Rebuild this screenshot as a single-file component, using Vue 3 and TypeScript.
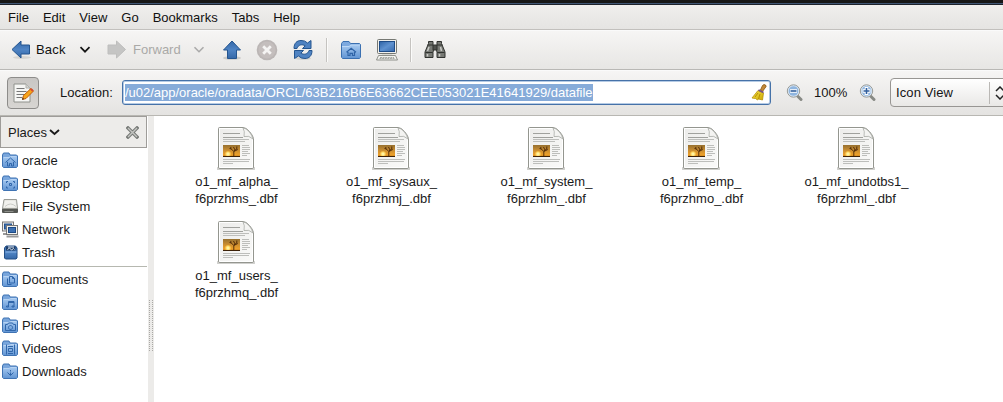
<script setup lang="ts">
interface Place {
  label: string
  icon: 'home' | 'desktop' | 'drive' | 'network' | 'trash' | 'docs' | 'music' | 'pictures' | 'videos' | 'downloads'
}

const menus: string[] = ['File', 'Edit', 'View', 'Go', 'Bookmarks', 'Tabs', 'Help']

const groups: Place[][] = [
  [
    { label: 'oracle', icon: 'home' },
    { label: 'Desktop', icon: 'desktop' },
    { label: 'File System', icon: 'drive' },
    { label: 'Network', icon: 'network' },
    { label: 'Trash', icon: 'trash' },
  ],
  [
    { label: 'Documents', icon: 'docs' },
    { label: 'Music', icon: 'music' },
    { label: 'Pictures', icon: 'pictures' },
    { label: 'Videos', icon: 'videos' },
    { label: 'Downloads', icon: 'downloads' },
  ],
]

const emblems: Record<string, string> = {
  home: 'M3.500 10.500 8.500 6 13.500 10.500M5.500 10v4h2v-2.500h2v2.500h2V10',
  desktop: 'M4.500 8V6.500h1.500M11 6.500h1.500V8M12.500 11.500V13H11M6 13H4.500v-1.500M7.500 8.500h2v2h-2z',
  docs: 'M5.500 7.500v6h4M7.500 5.500h3l2 2v4.500h-5zM10.500 5.500v2h2',
  music: 'M6.500 12.500v-5H12v5M4.500 12h2v1h-2zM10 12h2v1h-2zM6.500 8.500H12',
  pictures: 'M3.500 7.500h2l1-1.500h4l1 1.500h2v6h-10zM8.500 8.500a2 2 0 1 0 .01 0z',
  videos: 'M4.500 4.500v10M12.500 4.500v10M6 6.500h5M6.500 8.500h4v3h-4zM6 13.500h5M4 6.500h1M4 9.500h1M4 12.500h1M12 6.500h1M12 9.500h1M12 12.500h1',
  downloads: 'M8.500 7v1.500M8.500 9.500v2.500M5.500 9.500l3 3 3-3',
}

const files: [string, string][] = [
  ['o1_mf_alpha_', 'f6przhms_.dbf'],
  ['o1_mf_sysaux_', 'f6przhmj_.dbf'],
  ['o1_mf_system_', 'f6przhlm_.dbf'],
  ['o1_mf_temp_', 'f6przhmo_.dbf'],
  ['o1_mf_undotbs1_', 'f6przhml_.dbf'],
  ['o1_mf_users_', 'f6przhmq_.dbf'],
]

const gripRows: number[] = Array.from({ length: 13 }, (_, i) => i * 4)
</script>

<template>
  <div class="window">
    <svg class="defs" width="0" height="0">
      <defs>
        <linearGradient id="blue" x1="0" y1="0" x2="0" y2="1"><stop offset="0" stop-color="#3468a8" /><stop offset=".5" stop-color="#4f84c4" /><stop offset="1" stop-color="#3568a8" /></linearGradient>
        <linearGradient id="folder" x1="0" y1="0" x2="0" y2="1"><stop offset="0" stop-color="#a5c8ef" /><stop offset="1" stop-color="#6396d4" /></linearGradient>
        <linearGradient id="screen" x1="0" y1="0" x2="1" y2="1"><stop offset="0" stop-color="#2d62a5" /><stop offset=".5" stop-color="#5f92d0" /><stop offset="1" stop-color="#3569ad" /></linearGradient>
        <linearGradient id="paper" x1="0" y1="0" x2="1" y2="1"><stop offset="0" stop-color="#ececea" /><stop offset="1" stop-color="#fafaf9" /></linearGradient>
        <linearGradient id="sunset" x1="0" y1="0" x2="0" y2="1"><stop offset="0" stop-color="#96702f" /><stop offset=".5" stop-color="#cf9030" /><stop offset=".85" stop-color="#f0a22a" /><stop offset="1" stop-color="#7a450d" /></linearGradient>
        <linearGradient id="brush" x1="0" y1="0" x2="1" y2="1"><stop offset="0" stop-color="#f7e653" /><stop offset="1" stop-color="#cba800" /></linearGradient>
      </defs>
    </svg>
    <div class="titlebar"></div>
    <nav class="menubar"><span v-for="m in menus" :key="m">{{ m }}</span></nav>

    <div class="toolbar">
      <svg class="i-back" width="22" height="24" viewBox="0 0 22 24">
        <ellipse cx="12" cy="19.500" rx="9" ry="1.500" fill="#d5d4d1" />
        <path d="M2 11.500 11 3v4h8.500v9H11v4z" fill="url(#blue)" stroke="#24558f" />
      </svg>
      <span class="t-back">Back</span>
      <svg class="chev c1" width="12" height="8" viewBox="0 0 12 8"><path d="m1.500 1.200 4.500 4.500 4.500-4.500" fill="none" stroke="#151515" stroke-width="1.700" /></svg>
      <svg class="i-fwd" width="22" height="24" viewBox="0 0 22 24">
        <path d="M19.500 11.500 10.500 3v4H2v9h8.500v4z" fill="#c5c5c4" stroke="#bebebd" />
      </svg>
      <span class="t-fwd">Forward</span>
      <svg class="chev c2" width="12" height="8" viewBox="0 0 12 8"><path d="m1.500 1.200 4.500 4.500 4.500-4.500" fill="none" stroke="#aaa" stroke-width="1.600" /></svg>
      <svg class="i-up" width="22" height="24" viewBox="0 0 22 24">
        <ellipse cx="11" cy="20" rx="9" ry="1.800" fill="#cbcac7" />
        <path d="M11 3 19.500 12H15.500v8.500h-9V12H2.500z" fill="url(#blue)" stroke="#24558f" />
      </svg>
      <svg class="i-stop" width="22" height="22" viewBox="0 0 22 22">
        <circle cx="11" cy="11" r="10.300" fill="#bbb6b5" /><circle cx="11" cy="11" r="8.500" fill="#c4bebd" />
        <path d="m7.200 7.200 7.600 7.600m0-7.600-7.600 7.600" stroke="#f5f4f3" stroke-width="2.800" />
      </svg>
      <svg class="i-refresh" width="22" height="24" viewBox="0 0 22 24">
        <ellipse cx="11" cy="20.500" rx="8" ry="1.500" fill="#d2d1ce" />
        <g fill="#4f83c2" stroke="#24558f" stroke-linejoin="round">
          <path d="M2 10.500C2 5 5 2.500 9 2.500q4-.2 6.500 2.500L19 2.500v8h-8.500l2.700-2.700C10.500 6 6 6.500 5 10.500z" />
          <path d="M20 12.500C20 18 17 20.500 13 20.500q-4 .2-6.500-2.500L2.500 20.500v-8H11.500l-2.700 2.700C11.500 17 16 16.500 17 12.500z" />
        </g>
      </svg>
      <i class="sep s1"></i>
      <svg class="i-folder" width="20" height="18" viewBox="0 0 20 18">
        <path d="M.5 16V2.500L2 .5h6l1.500 2h9l1 1V16l-1 1.500h-17z" fill="#7da9df" stroke="#3b70b1" />
        <path d="M1 5.500 8 5.500 10 4h9v13H1z" fill="url(#folder)" /><path d="M1 5.500h7L10 4h9" fill="none" stroke="#bdd8f6" />
        <path d="m5.500 11.200 4.700-4 4.800 4M7 11v3.500h2v-2.200h2.500v2.200h2V11" fill="none" stroke="#2f64a7" stroke-width="1.200" />
      </svg>
      <svg class="i-computer" width="22" height="22" viewBox="0 0 22 22">
        <rect x="1.500" y=".5" width="19" height="14" rx="1" fill="#efefec" stroke="#767873" /><rect x="3.500" y="2.500" width="15" height="10" fill="url(#screen)" stroke="#1f4c87" />
        <path d="M6 15.500h10l1 1.500H5z" fill="#c6c7c2" /><path d="M2.500 16.500h17l2 4.500H.5z" fill="#f2f2ef" stroke="#8e908a" /><path d="M4 18.500h14M3.500 19.500h15" stroke="#a8aaa5" stroke-dasharray="2 .6" />
      </svg>
      <i class="sep s2"></i>
      <svg class="i-find" width="22" height="18" viewBox="0 0 22 18">
        <g fill="#777974" stroke="#30322f" stroke-linejoin="round">
          <path d="M4.500 2.500v-2H9v3l1 2-1 6v5H1v-5.500zM17.500 2.500v-2H13v3l-1 2 1 6v5h8v-5.500z" />
          <path d="M9 4h4v5H9z" fill="#4e504c" /><path d="M1.500 11.500h7.200M13.300 11.500h7.200M3.500 4H9M13 4h5.500" fill="none" />
        </g>
        <path d="M5 6 3.500 10M16.500 6l1 4M3.500 13v2.500M15.500 13v2.500" stroke="#c9cac6" stroke-width="1.500" />
      </svg>
    </div>

    <div class="location">
      <div class="edit-btn">
        <svg width="22" height="24" viewBox="0 0 22 24">
          <path d="M2 3h12l4 4v14H2z" fill="#f6f6f4" stroke="#8f918c" /><path d="M14 3v4h4" fill="#d5d5d1" stroke="#b1b2ae" />
          <path d="M4.500 7.500h8M4.500 10.500h10M4.500 13.500h8M4.500 16.500h6" stroke="#777" />
          <path d="m10.500 18.500 1-4 7.500-7 2.500 2.500-7.500 7.500z" fill="#f6a51b" stroke="#c65a05" /><path d="m18 8.500 1.500-1.200 2 2-1.300 1.400z" fill="#d84b37" /><path d="m10.200 18.800.5-2 1.300 1.300z" fill="#222" />
        </svg>
      </div>
      <span class="loc-label">Location:</span>
      <div class="entry">
        <span class="selected">/u02/app/oracle/oradata/ORCL/63B216B6E63662CEE053021E41641929/datafile</span>
        <svg class="broom" width="16" height="17" viewBox="0 0 16 17">
          <path d="m9.500 6 2-4.500Q13-.2 14.500 1T14 4l-2.500 3.500z" fill="#c28a3b" stroke="#8b5710" stroke-width=".8" />
          <path d="M7 6.500 12.500 9l-1 7-4-1-1 1-2-1.500L1 14Z" fill="url(#brush)" stroke="#b89107" stroke-width=".8" /><path d="m7.500 6 5 2.500" stroke="#765281" stroke-width="1.800" /><path d="m7 9-3 4M9 10l-1.500 5" stroke="#b98e05" />
        </svg>
      </div>
      <svg class="zoom-out" width="17" height="17" viewBox="0 0 17 17">
        <path d="m11 11.500 4 4" stroke="#888a85" stroke-width="3" stroke-linecap="round" /><circle cx="7.500" cy="7" r="6.200" fill="#d9e7f5" stroke="#999b97" /><circle cx="7.500" cy="7" r="4.800" fill="#8fb5df" /><path d="M4 7h7" stroke="#fff" stroke-width="3.500" /><path d="M4.500 7h6" stroke="#315f9d" stroke-width="1.600" />
      </svg>
      <span class="percent">100%</span>
      <svg class="zoom-in" width="17" height="17" viewBox="0 0 17 17">
        <path d="m11 11.500 4 4" stroke="#888a85" stroke-width="3" stroke-linecap="round" /><circle cx="7.500" cy="7" r="6.200" fill="#d9e7f5" stroke="#999b97" /><circle cx="7.500" cy="7" r="4.800" fill="#8fb5df" /><path d="M3.500 7h8m-4-4v8" stroke="#fff" stroke-width="3.500" /><path d="M4.500 7h6m-3-3v6" stroke="#315f9d" stroke-width="1.600" />
      </svg>
      <div class="combo"><span>Icon View</span><i></i>
        <svg width="12" height="14" viewBox="0 0 12 14"><path d="M2 5 6 1l4 4M2 9l4 4 4-4" fill="none" stroke="#222" stroke-width="1.500" /></svg>
      </div>
    </div>

    <main class="body">
      <aside class="side">
        <header class="side-head">
          <span>Places</span>
          <svg class="drop" width="11" height="7" viewBox="0 0 11 7"><path d="m1 1 4.500 4L10 1" fill="none" stroke="#1b1b1b" stroke-width="1.900" /></svg>
          <svg class="close" width="13" height="13" viewBox="0 0 13 13"><path d="m2 2 9 9m0-9-9 9" stroke="#777a77" stroke-width="3.400" stroke-linecap="square" /><path d="m2 2 9 9m0-9-9 9" stroke="#c4c5c2" stroke-width="1.400" /></svg>
        </header>
        <ul v-for="(g, gi) in groups" :key="gi" class="places">
          <li v-for="p in g" :key="p.label">
            <svg width="17" height="17" viewBox="0 0 17 17">
              <template v-if="p.icon === 'drive'">
                <path d="M2 1.500h12.500l1 9v3H.5v-3z" fill="#deded9" stroke="#999b96" /><path d="M3 2.500h10.500l1 7H1.500z" fill="#f1f1ee" /><path d="M3 8.500q5.500-5 11 0" fill="none" stroke="#cacbc7" /><rect x="0" y="10.500" width="16" height="4.500" rx="1" fill="#555753" /><path d="M2.500 13.500h9" stroke="#8d8f8a" />
              </template>
              <template v-else-if="p.icon === 'network'">
                <rect x=".5" y="1" width="11" height="9" fill="#eee" stroke="#777" /><rect x="2.500" y="3" width="7" height="5" fill="#3c70b2" stroke="#24538e" /><path d="M1 13h5" stroke="#999" stroke-width="2" />
                <rect x="4.500" y="4.500" width="11" height="9" fill="#f2f2ef" stroke="#777" /><rect x="6.500" y="6.500" width="7" height="5" fill="#3c70b2" stroke="#1d4a85" /><path d="M4.500 15.500h12" stroke="#999" stroke-width="2" />
              </template>
              <template v-else-if="p.icon === 'trash'">
                <path d="M2.500 4 4 2h9.500l1.500 2v10l-1 1h-10.500l-1-1z" fill="url(#blue)" stroke="#234f87" /><path d="M4 2.500h9.500v4H4z" fill="#203e67" /><path d="M6 3h6M5.500 5.500l2-1.500 2 2 2-1.500 1 1" fill="none" stroke="#dce7f4" /><path d="M3.500 8h11" stroke="#8eb5e6" />
              </template>
              <template v-else>
                <path d="M.5 14.500V3l1-2h5.500l1 2h6.500l1 1V14.500l-1 1h-13z" fill="#79a6dc" stroke="#3f73b3" /><path d="M1 5.500h6L8.500 4.500H15V15H1z" fill="url(#folder)" /><path d="M1.500 5.500h5.500L8.500 4.500h6" fill="none" stroke="#b7d3f3" />
                <path :d="emblems[p.icon]" fill="none" stroke="#3066aa" />
              </template>
            </svg>
            <span>{{ p.label }}</span>
          </li>
        </ul>
      </aside>
      <div class="splitter">
        <svg width="6" height="52" viewBox="0 0 6 52"><g v-for="y in gripRows" :key="y" fill="#aaa9a6"><rect x="1" :y="y" width="1" height="1" /><rect x="4" :y="y" width="1" height="1" /><rect x="1" :y="y + 2" width="1" height="1" /><rect x="4" :y="y + 2" width="1" height="1" /></g></svg>
      </div>
      <section class="files">
        <div v-for="f in files" :key="f[0]" class="file">
          <svg class="doc" width="38" height="44" viewBox="0 0 38 44">
            <path d="M1 42.500h36" stroke="#d0d0cd" stroke-width="3" stroke-linecap="round" />
            <path d="M1.500 2.500q0-1 1-1H26q3 0 6.500 4t4 7V41q0 1.500-1.500 1.500H3q-1.500 0-1.500-1.500z" fill="url(#paper)" stroke="#94968f" />
            <path d="M2.500 2.500H26q2 2 1 7 5-.5 8.500 3V41.500h-33z" fill="none" stroke="#fff" />
            <path d="M26 2q2 3 1 8.500 5-1.500 9 2.500-1-4-4-7.500T26 2z" fill="#f4f4f2" stroke="#a6a8a3" stroke-width=".8" />
            <path d="M6 7.500h17M6 11.500h20M6 13.500h26M6 15.500h22M25 19.500h7M25 21.500h8M25 23.500h8M25 25.500h6M25 27.500h8M25 29.500h5M6 33.500h27M6 35.500h26M6 37.500h10" stroke="#bdbebb" />
            <path d="M6 7.500h17M6 11.500h20" stroke="#a0a19d" />
            <rect x="6" y="19" width="17" height="12" fill="url(#sunset)" /><circle cx="11" cy="28" r="2.800" fill="#fbc950" /><circle cx="11" cy="28" r="1.700" fill="#fff3a0" />
            <path d="M16.800 30v-4.500l-3-3v-1.500m3 4 3-2v-2.500m-3 5 4-2M14.500 23l-2-.5M18 24l-1.500-3" fill="none" stroke="#4a2606" stroke-width=".9" /><path d="M6 30.500h17" stroke="#3c2108" />
          </svg>
          <div class="name"><span>{{ f[0] }}</span><span>{{ f[1] }}</span></div>
        </div>
      </section>
    </main>
  </div>
</template>

<style>
body { margin: 0; overflow: hidden; }
</style>

<style scoped>
.window { width: 1003px; height: 402px; overflow: hidden; display: flex; flex-direction: column; background: #fff; color: #1a1a1a; font: 13px/17px "Liberation Sans", Arial, sans-serif; box-sizing: border-box; }
.window * { box-sizing: border-box; }
svg { display: block; flex: none; }
.defs { position: absolute; }
.titlebar { height: 5px; flex: none; background: linear-gradient(#171717 0 3px, #405674 3px 4px, #1d222b 4px 5px); }
.menubar { height: 25px; flex: none; display: flex; align-items: center; gap: 14px; padding-left: 8px; background: linear-gradient(#f0efed, #e5e4e2); border-bottom: 1px solid #c2c0bd; color: #111; }
.toolbar { height: 40px; flex: none; display: flex; align-items: center; padding-bottom: 1px; background: linear-gradient(#f6f5f4, #e7e6e4); border-top: 1px solid #fafafa; border-bottom: 1px solid #b9b8b5; }
.i-back { margin-left: 10px; }
.t-back { width: 31px; margin-left: 4px; color: #111; letter-spacing: .2px; }
.c1 { margin-left: 12px; }
.i-fwd { margin-left: 15px; }
.t-fwd { width: 48px; margin-left: 5px; color: #aaa9a7; }
.c2 { margin-left: 12px; }
.i-up { margin-left: 16px; }
.i-stop { margin-left: 13px; }
.i-refresh { margin-left: 14px; }
.sep { flex: none; width: 2px; height: 24px; background: #c5c3c0; border-right: 1px solid #fbfbfa; }
.s1 { margin-left: 12px; }
.i-folder { margin-left: 13px; }
.i-computer { margin-left: 15px; }
.s2 { margin-left: 12px; }
.i-find { margin-left: 12px; }
.location { height: 46px; flex: none; display: flex; align-items: center; padding-bottom: 1px; background: linear-gradient(#f6f5f4, #e4e3e1); border-top: 1px solid #fafafa; border-bottom: 1px solid #b8b7b2; color: #151515; }
.location > * { flex: none; }
.edit-btn { width: 32px; height: 32px; margin-left: 7px; border: 1px solid #8d8c8a; border-radius: 4px; background: linear-gradient(#c8c6c4, #d7d5d2); display: flex; align-items: center; justify-content: center; }
.loc-label { width: 54px; margin-left: 21px; }
.entry { width: 649px; height: 25px; margin-left: 8px; padding: 0 3px 0 2px; border: 1px solid #4672a8; border-radius: 3px; background: #fff; box-shadow: inset 0 0 0 1px #b5cbe5; display: flex; align-items: center; justify-content: space-between; }
.selected { height: 17px; background: #86abd9; color: #fff; white-space: nowrap; letter-spacing: -.012px; }
.zoom-out { margin-left: 15px; }
.percent { width: 33px; margin-left: 11px; }
.zoom-in { margin-left: 12px; }
.combo { width: 130px; height: 29px; margin-left: 14px; padding-left: 5px; display: flex; align-items: center; border: 1px solid #989693; border-radius: 4px; background: linear-gradient(#fff, #e9e8e6); }
.combo span { width: 93px; letter-spacing: .1px; }
.combo i { width: 1px; height: 22px; background: #bab8b5; margin-right: 4px; }
.body { flex: 1; min-height: 0; display: flex; }
.side { width: 148px; flex: none; padding-right: 1px; }
.side-head { height: 32px; margin-bottom: 1px; padding: 0 7px 0 7px; display: flex; align-items: center; background: #edecea; border: 1px solid #9e9c99; }
.side-head .drop { margin-left: 2px; }
.side-head .close { margin-left: auto; }
.places { margin: 0; padding: 0; list-style: none; }
.places + .places { border-top: 1px solid #b6b8b0; margin-top: 2px; padding-top: 1px; }
.places li { height: 23px; padding-left: 2px; display: flex; align-items: center; gap: 3px; letter-spacing: .05px; }
.splitter { width: 6px; flex: none; background: #ecebe9; padding-top: 184px; }
.files { flex: 1; display: grid; grid-template-columns: repeat(5, 155px); grid-auto-rows: 94px; align-content: start; padding: 10px 0 0 5px; }
.file { display: flex; flex-direction: column; align-items: center; }
.doc { margin-right: 2px; }
.name { display: flex; flex-direction: column; align-items: center; margin-top: 3px; }
</style>
